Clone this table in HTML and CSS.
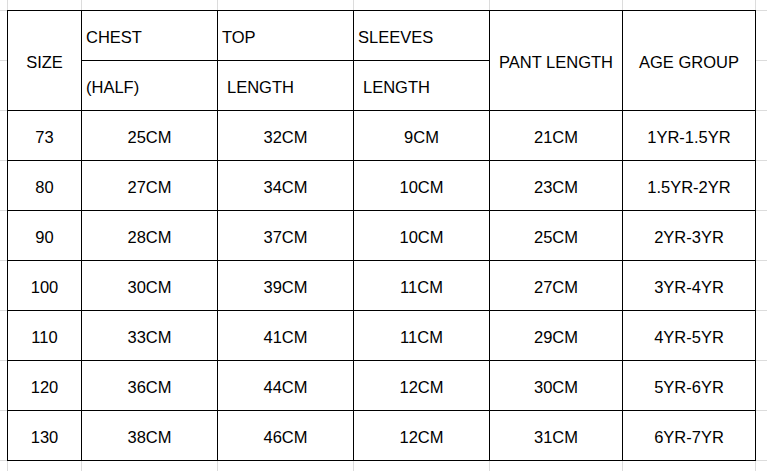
FILE: index.html
```html
<!DOCTYPE html>
<html>
<head>
<meta charset="utf-8">
<link rel="stylesheet" href="styles.css">
</head>
<body>
<table class="size-table">
  <colgroup>
    <col class="c-size">
    <col class="c-wide">
    <col class="c-wide">
    <col class="c-wide">
    <col class="c-mid">
    <col class="c-mid">
  </colgroup>
  <thead>
    <tr>
      <th rowspan="2" class="center">SIZE</th>
      <th class="left">CHEST</th>
      <th class="left">TOP</th>
      <th class="left">SLEEVES</th>
      <th rowspan="2" class="center">PANT LENGTH</th>
      <th rowspan="2" class="center">AGE GROUP</th>
    </tr>
    <tr>
      <th class="left">(HALF)</th>
      <th class="left indent">LENGTH</th>
      <th class="left indent">LENGTH</th>
    </tr>
  </thead>
  <tbody>
    <tr><td>73</td><td>25CM</td><td>32CM</td><td>9CM</td><td>21CM</td><td>1YR-1.5YR</td></tr>
    <tr><td>80</td><td>27CM</td><td>34CM</td><td>10CM</td><td>23CM</td><td>1.5YR-2YR</td></tr>
    <tr><td>90</td><td>28CM</td><td>37CM</td><td>10CM</td><td>25CM</td><td>2YR-3YR</td></tr>
    <tr><td>100</td><td>30CM</td><td>39CM</td><td>11CM</td><td>27CM</td><td>3YR-4YR</td></tr>
    <tr><td>110</td><td>33CM</td><td>41CM</td><td>11CM</td><td>29CM</td><td>4YR-5YR</td></tr>
    <tr><td>120</td><td>36CM</td><td>44CM</td><td>12CM</td><td>30CM</td><td>5YR-6YR</td></tr>
    <tr><td>130</td><td>38CM</td><td>46CM</td><td>12CM</td><td>31CM</td><td>6YR-7YR</td></tr>
  </tbody>
</table>
</body>
</html>
```

FILE: styles.css
```css
html, body {
  margin: 0;
  padding: 0;
}

body {
  width: 767px;
  height: 471px;
  overflow: hidden;
  background-color: #ffffff;
  background-image:
    linear-gradient(#dcdcdc, #dcdcdc),
    linear-gradient(#dcdcdc, #dcdcdc),
    linear-gradient(#dcdcdc, #dcdcdc),
    linear-gradient(#dcdcdc, #dcdcdc),
    linear-gradient(#dcdcdc, #dcdcdc),
    linear-gradient(#dcdcdc, #dcdcdc),
    linear-gradient(#dcdcdc, #dcdcdc),
    repeating-linear-gradient(to bottom, #dcdcdc 0 1px, transparent 1px 50px);
  background-size:
    1px 100%, 1px 100%, 1px 100%, 1px 100%, 1px 100%, 1px 100%, 1px 100%,
    100% 100%;
  background-position:
    7px 0, 81px 0, 217px 0, 353px 0, 489px 0, 622px 0, 755px 0,
    0 10px;
  background-repeat: no-repeat, no-repeat, no-repeat, no-repeat, no-repeat, no-repeat, no-repeat, repeat;
  font-family: "Liberation Sans", Arial, sans-serif;
  font-size: 16.5px;
  color: #000000;
}

.size-table {
  margin: 10px 0 0 7px;
  border-collapse: collapse;
  table-layout: fixed;
  width: 749px;
  background: #ffffff;
}

.c-size { width: 74px; }
.c-wide { width: 136px; }
.c-mid { width: 133px; }

.size-table th,
.size-table td {
  border: 1px solid #000000;
  height: 49px;
  padding: 4px 0 0 0;
  box-sizing: border-box;
  font-weight: normal;
  text-align: center;
  vertical-align: middle;
  white-space: nowrap;
}

.size-table tr {
  height: 50px;
}

.size-table th.left {
  text-align: left;
  padding-left: 4px;
}

.size-table th.indent {
  padding-left: 9px;
}
```
